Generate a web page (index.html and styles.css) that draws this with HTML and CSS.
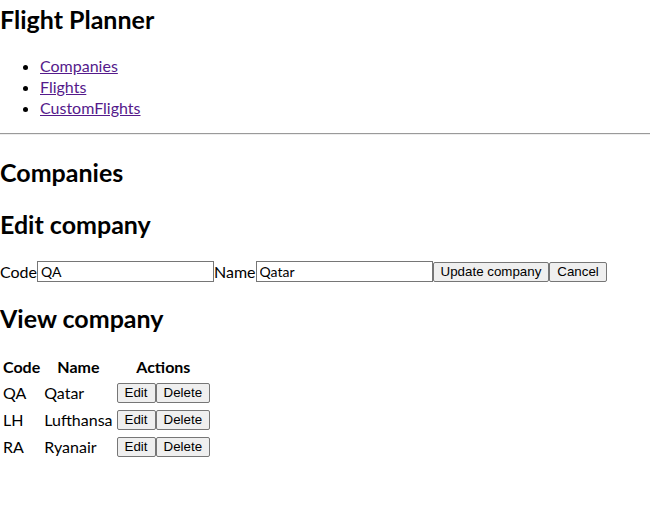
FILE: index.html
```html
<!DOCTYPE html>
<html>
<head>
<meta charset="utf-8">
<link rel="stylesheet" href="styles.css">
</head>
<body>
<h2 class="title">Flight Planner</h2>
<ul class="nav">
  <li><a href="#">Companies</a></li>
  <li><a href="#">Flights</a></li>
  <li><a href="#">CustomFlights</a></li>
</ul>
<hr class="rule">
<h2>Companies</h2>
<h2>Edit company</h2>
<form class="edit-form">
  <label>Code</label><input class="field" type="text" value="QA"><label>Name</label><input class="field" type="text" value="Qatar"><button type="button" class="btn">Update company</button><button type="button" class="btn">Cancel</button>
</form>
<h2>View company</h2>
<table class="list">
  <thead>
    <tr><th>Code</th><th>Name</th><th>Actions</th></tr>
  </thead>
  <tbody>
    <tr><td>QA</td><td>Qatar</td><td><div class="actions"><button type="button" class="btn">Edit</button><button type="button" class="btn">Delete</button></div></td></tr>
    <tr><td>LH</td><td>Lufthansa</td><td><div class="actions"><button type="button" class="btn">Edit</button><button type="button" class="btn">Delete</button></div></td></tr>
    <tr><td>RA</td><td>Ryanair</td><td><div class="actions"><button type="button" class="btn">Edit</button><button type="button" class="btn">Delete</button></div></td></tr>
  </tbody>
</table>
</body>
</html>
```
FILE: styles.css
```css
html, body {
  margin: 0;
  padding: 0;
  background: #fff;
}
body {
  font-family: "Lato", sans-serif;
  font-size: 16px;
  color: #000;
}
h2 {
  font-size: 25px;
  font-weight: 700;
  line-height: 32px;
  margin: 20px 0;
}
h2.title {
  margin-top: 3px;
}
.nav {
  margin: 16px 0 15px;
  padding-left: 40px;
  line-height: 21px;
}
.nav a {
  color: #551a8b;
}
.rule {
  margin: 8px 0 21px;
  border: 0;
  border-top: 1px solid #9a9a9a;
  border-bottom: 1px solid #eee;
}
.edit-form {
  display: flex;
  align-items: center;
  height: 21px;
  margin-top: 21px;
}
.field {
  box-sizing: border-box;
  width: 177px;
  height: 21px;
  padding: 1px 3px;
  margin: 0;
  border: 1px solid #767676;
  font-family: "Lato", sans-serif;
  font-size: 14px;
}
.btn {
  box-sizing: border-box;
  font-family: "Liberation Sans", Arial, sans-serif;
  font-size: 13.33px;
  padding: 1px 7px;
  margin: 0;
  background: #efefef;
  border: 1px solid #767676;
  border-radius: 2px;
  height: 20px;
  color: #000;
}
.list {
  border-spacing: 2px;
}
.list th, .list td {
  padding: 1px;
  line-height: 23px;
}
.list th {
  font-weight: 700;
  line-height: 20px;
}
.actions {
  display: flex;
  align-items: center;
  height: 23px;
}
```
